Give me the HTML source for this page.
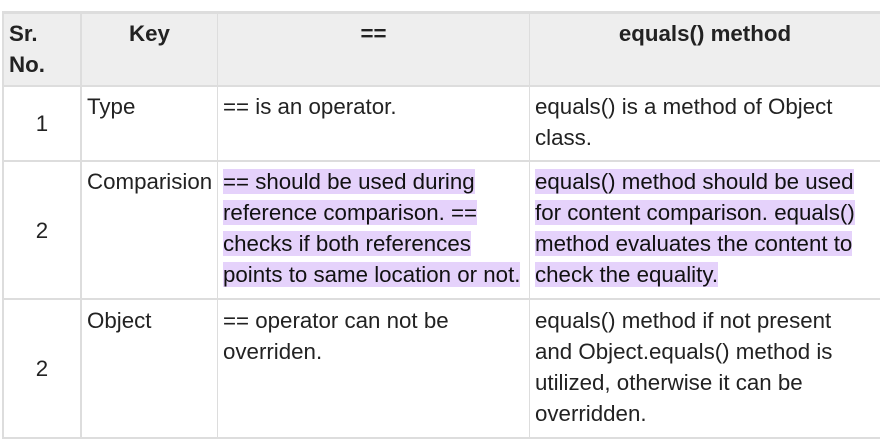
<!DOCTYPE html>
<html><head><meta charset="utf-8"><style>
html,body{margin:0;padding:0;background:#fff;width:880px;height:441px;overflow:hidden}
body{font-family:"Liberation Sans",Arial,sans-serif;font-size:22.3px;color:#222;position:relative}
.c{position:absolute;box-sizing:border-box;line-height:31px;white-space:nowrap;padding:2px 6px 0 6px}
.h{background:transparent;font-weight:bold;color:#222;padding-top:4px}
.hl{background:#e5d2fb;color:#111}
.vl{position:absolute;background:#ddd}
.n{text-align:center;display:flex;align-items:center;justify-content:center;padding:0}
</style></head><body>
<div style="position:absolute;left:2px;top:11px;width:878px;height:75px;background:#eee"></div>
<div class="vl" style="left:2px;top:11px;width:878px;height:3px"></div>
<div class="vl" style="left:2px;top:85px;width:878px;height:2px"></div>
<div class="vl" style="left:2px;top:160px;width:878px;height:2px"></div>
<div class="vl" style="left:2px;top:298px;width:878px;height:2px"></div>
<div class="vl" style="left:2px;top:437px;width:878px;height:2px"></div>
<div class="vl" style="left:2px;top:11px;width:2px;height:428px"></div>
<div class="vl" style="left:80px;top:11px;width:2px;height:428px"></div>
<div class="vl" style="left:217px;top:11px;width:1px;height:428px"></div>
<div class="vl" style="left:529px;top:11px;width:1px;height:428px"></div>

<div class="c h" style="left:3px;top:14px;width:76px">Sr.<br>No.</div>
<div class="c h" style="left:82px;top:14px;width:135px;text-align:center">Key</div>
<div class="c h" style="left:218px;top:14px;width:311px;text-align:center">==</div>
<div class="c h" style="left:530px;top:14px;width:350px;text-align:center">equals() method</div>

<div class="c n" style="left:4px;top:87px;width:76px;height:73px">1</div>
<div class="c" style="left:81px;top:89px">Type</div>
<div class="c" style="left:217px;top:89px">== is an operator.</div>
<div class="c" style="left:529px;top:89px">equals() is a method of Object<br>class.</div>

<div class="c n" style="left:4px;top:162px;width:76px;height:136px">2</div>
<div class="c" style="left:81px;top:164px">Comparision</div>
<div class="c" style="left:217px;top:164px"><span class="hl">== should be used during</span><br><span class="hl">reference comparison. ==</span><br><span class="hl">checks if both references</span><br><span class="hl">points to same location or not.</span></div>
<div class="c" style="left:529px;top:164px"><span class="hl">equals() method should be used</span><br><span class="hl">for content comparison. equals()</span><br><span class="hl">method evaluates the content to</span><br><span class="hl">check the equality.</span></div>

<div class="c n" style="left:4px;top:300px;width:76px;height:137px">2</div>
<div class="c" style="left:81px;top:303px">Object</div>
<div class="c" style="left:217px;top:303px">== operator can not be<br>overriden.</div>
<div class="c" style="left:529px;top:303px">equals() method if not present<br>and Object.equals() method is<br>utilized, otherwise it can be<br>overridden.</div>
</body></html>
